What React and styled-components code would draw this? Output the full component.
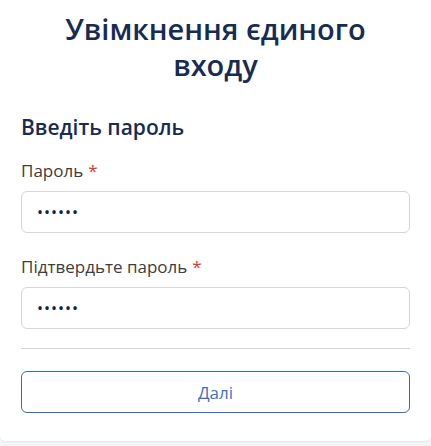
import styled, { createGlobalStyle } from "styled-components";

const GlobalStyle = createGlobalStyle`
  html, body {
    margin: 0;
    padding: 0;
    background: #f3f4f7;
    font-family: "Open Sans", "Noto Sans", sans-serif;
  }
  * { box-sizing: border-box; }
`;

const Card = styled.div`
  width: 431px;
  background: #fff;
  border-bottom: 1px solid #e4e6ea;
  border-radius: 0 0 6px 6px;
  padding: 11px 21px 28px;
  display: flex;
  flex-direction: column;
`;

const Title = styled.h1`
  margin: 0;
  text-align: center;
  font-size: 29px;
  font-weight: 600;
  line-height: 36px;
  color: #172c54;
`;

const Subtitle = styled.h2`
  margin: 30px 0 0;
  font-size: 21px;
  font-weight: 600;
  line-height: 28px;
  color: #172c54;
`;

const Field = styled.div`
  display: flex;
  flex-direction: column;
  margin-top: ${(p) => p.$top}px;
`;

const Label = styled.label`
  font-size: 17px;
  line-height: 22px;
  color: #3d3d3d;
  margin-bottom: 9px;
`;

const Star = styled.span`
  color: #e0342f;
  margin-left: 5px;
`;

const Input = styled.input`
  height: 42px;
  width: 100%;
  border: 1px solid #d6d6d6;
  border-radius: 6px;
  padding: 0 15px;
  font-size: 16px;
  color: #0f2448;
  font-family: inherit;
  letter-spacing: 1px;
  outline: none;
`;

const Divider = styled.hr`
  margin: 19px 0 0;
  border: none;
  border-top: 1px solid #d4d4d4;
`;

const Button = styled.button`
  margin-top: 22px;
  height: 42px;
  width: 100%;
  background: #fff;
  border: 1px solid #2e6bc6;
  border-radius: 6px;
  color: #3d70c9;
  font-family: inherit;
  font-size: 17px;
  cursor: pointer;
`;

const App = () => {
  return (
    <>
      <GlobalStyle />
      <Card>
        <Title>Увімкнення єдиного входу</Title>
        <Subtitle>Введіть пароль</Subtitle>
        <Field $top={19}>
          <Label>
            Пароль<Star>*</Star>
          </Label>
          <Input type="password" defaultValue="123456" />
        </Field>
        <Field $top={23}>
          <Label>
            Підтвердьте пароль<Star>*</Star>
          </Label>
          <Input type="password" defaultValue="123456" />
        </Field>
        <Divider />
        <Button>Далі</Button>
      </Card>
    </>
  );
};

export default App;
